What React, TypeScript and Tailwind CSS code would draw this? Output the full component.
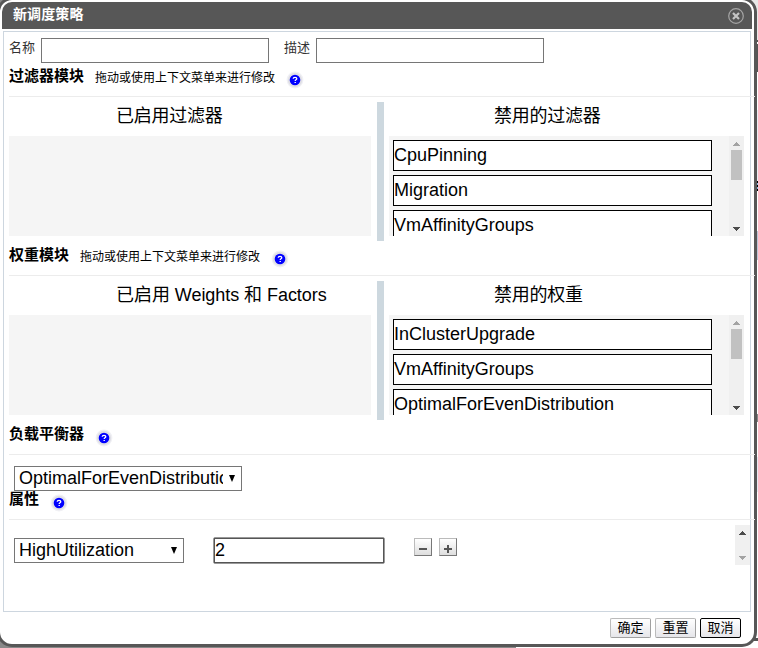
import React from "react";

function Help({ className = "" }: { className?: string }) {
  return (
    <svg className={`h-[18px] w-[18px] shrink-0 ${className}`} viewBox="0 0 18 18">
      <circle cx="9" cy="9" r="8.4" fill="#f0f0f4" />
      <circle cx="9" cy="9" r="7.2" fill="#dfdfe6" />
      <circle cx="9" cy="9" r="5.3" fill="#0000ff" />
      <path d="M7.2 7.7C7.2 5.9 10.8 5.9 10.8 7.7C10.8 8.8 9.2 8.8 9.2 10" fill="none" stroke="#fff" strokeWidth="1.3" />
      <path d="M8.5 10.9h1.4v1.2h-1.4z" fill="#fff" />
    </svg>
  );
}

function Heading({ title, hint, helpClass }: { title: string; hint?: string; helpClass: string }) {
  return (
    <div className="flex h-[33px] w-[746px] shrink-0 border-b border-[#ececec] whitespace-nowrap">
      <div className="h-[24px] text-[15px] leading-[24px] font-bold text-black">{title}</div>
      {hint && <div className="ml-[11px] h-[28px] text-[12px] leading-[28px] text-black">{hint}</div>}
      <Help className={helpClass} />
    </div>
  );
}

function Arrow({ down = false, color }: { down?: boolean; color: string }) {
  return (
    <svg className="h-[4px] w-[7px]" viewBox="0 0 7 4" shapeRendering="crispEdges" fill={color}>
      {down ? (
        <path d="M0 0h7v1H0zM1 1h5v1H1zM2 2h3v1H2zM3 3h1v1H3z" />
      ) : (
        <path d="M3 0h1v1H3zM2 1h3v1H2zM1 2h5v1H1zM0 3h7v1H0z" />
      )}
    </svg>
  );
}

function Policies({ left, right, items, leftClass }: { left: string; right: string; items: string[]; leftClass: string }) {
  return (
    <div className="flex h-[144px] shrink-0 pt-[5px] text-[18px] text-black">
      <div className="w-[362px]">
        <div className={`h-[34px] pl-[107px] leading-[28px] ${leftClass}`}>{left}</div>
        <div className="h-[100px] bg-[#f5f5f5]" />
      </div>
      <div className="ml-[6px] h-[139px] w-[7px] bg-[#cdd8df]" />
      <div className="ml-[5px] w-[355px]">
        <div className="h-[34px] pl-[105px] leading-[28px] tracking-[-0.25px]">{right}</div>
        <div className="flex h-[100px] overflow-hidden bg-[#f5f5f5]">
          <div className="flex w-[340px] flex-col gap-1 pt-1 pl-1">
            {items.map((item) => (
              <div key={item} className="h-[31px] w-[319px] shrink-0 border border-black bg-white leading-[28px]">
                {item}
              </div>
            ))}
          </div>
          <div className="flex h-[100px] w-[15px] flex-col items-center bg-[#f0f0f0] pt-[6px]">
            <Arrow color="#a3a3a3" />
            <div className="mt-1 mr-px ml-px h-[30px] w-[11px] bg-[#c1c1c1]" />
            <div className="mt-[47px] flex"><Arrow down color="#4c4c4c" /></div>
          </div>
        </div>
      </div>
    </div>
  );
}

function Select({ value, className }: { value: string; className: string }) {
  return (
    <div className={`flex h-[25px] items-center border border-[#767676] bg-white pl-1 text-[18px] leading-[23px] text-black ${className}`}>
      <div className="min-w-0 flex-1 overflow-hidden">{value}</div>
      <svg className="mr-[6px] ml-[6px] h-[7px] w-[6px]" viewBox="0 0 6 7"><path d="M0 0h6L3 7z" fill="#000" /></svg>
    </div>
  );
}

function SmallButton({ plus = false }: { plus?: boolean }) {
  return (
    <div className="flex h-[18px] w-[18px] items-center justify-center border border-t-[#bbb] border-r-[#777] border-b-[#777] border-l-[#bbb] bg-linear-to-b from-white to-[#dedede]">
      <svg className="mt-[3px] h-[8px] w-[8px]" viewBox="0 0 8 8" fill="#555">
        <path d="M0 3h8v2H0z" />
        {plus && <path d="M3 0h2v8H3z" />}
      </svg>
    </div>
  );
}

function FooterButton({ label, active = false }: { label: string; active?: boolean }) {
  return (
    <div
      className={`h-[20px] w-[41px] rounded-[2px] border bg-linear-to-b from-white to-[#e6e6ea] text-center text-[13px] leading-[17px] text-black ${
        active ? "border-black" : "border-t-[#bbb] border-r-[#a0a0a0] border-b-[#a0a0a0] border-l-[#bbb]"
      }`}
    >
      {label}
    </div>
  );
}

const edge = [
  "h-[40px] bg-[#e8e8e8]", "h-[2px] bg-[#555]", "h-[2px] bg-white", "h-[28px] bg-[#555]",
  "h-[38px] bg-white", "h-[71px] bg-[#eceef4]", "h-[2px] bg-black", "h-[2px] bg-[#91b9e0]",
  "h-[2px] bg-black", "h-[2px] bg-[#91b9e0]", "h-[2px] bg-black", "h-[40px] bg-white",
  "h-[29px] bg-[#bdc6d8]", "h-[154px] bg-white", "h-[8px] bg-[#888]", "h-[35px] bg-white",
  "h-[35px] bg-[#e9eaf2]", "h-[146px] bg-white", "h-[3px] bg-[#555]", "h-[9px] bg-white",
];

export default function App() {
  return (
    <div
      className="relative h-[648px] w-[758px] overflow-hidden bg-[#898989]"
      style={{ fontFamily: '"Liberation Sans", "Noto Sans CJK SC", sans-serif' }}
    >
      <div className="absolute top-0 right-0 flex h-[648px] w-[8px] flex-col">
        {edge.map((c, i) => <div key={i} className={`shrink-0 ${c}`} />)}
      </div>
      <div className="absolute right-0 bottom-0 h-[4px] w-[242px] bg-white" />
      <div className="absolute -top-[3px] -left-[3px] flex h-[650px] w-[760px] flex-col rounded-[15px] border-[3px] border-[#575757] bg-white px-[2px] pt-[2px]">
        <div className="flex h-[27px] w-[750px] shrink-0 items-center justify-between rounded-t-[10px] bg-[#575757] pr-[8px] pl-[11px]">
          <div className="pb-[3px] text-[14px] leading-[19px] font-bold tracking-[0.1px] text-white">新调度策略</div>
          <svg className="h-[16px] w-[16px]" viewBox="0 0 16 16" fill="none">
            <circle cx="8" cy="8" r="7.3" stroke="#a5a5a5" strokeWidth="1.2" />
            <path d="M5 5l6 6M11 5l-6 6" stroke="#c4c4c4" strokeWidth="2.2" />
          </svg>
        </div>
        <div className="mt-[2px] ml-px flex h-[581px] w-[748px] shrink-0 flex-col border border-[#cdd6df] pt-[6px] pl-[5px]">
          <div className="flex h-[26px] shrink-0 text-[13px] leading-[20px] text-[#333]">
            <div className="w-[32px]">名称</div>
            <div className="h-[25px] w-[228px] border border-[#767676]" />
            <div className="ml-[15px] w-[32px]">描述</div>
            <div className="h-[25px] w-[228px] border border-[#767676]" />
          </div>
          <Heading title="过滤器模块" hint="拖动或使用上下文菜单来进行修改" helpClass="mt-[7px] ml-[11px]" />
          <Policies left="已启用过滤器" leftClass="tracking-[-0.25px]" right="禁用的过滤器" items={["CpuPinning", "Migration", "VmAffinityGroups"]} />
          <div className="mt-[2px] flex">
            <Heading title="权重模块" hint="拖动或使用上下文菜单来进行修改" helpClass="mt-[7px] ml-[11px]" />
          </div>
          <Policies left="已启用 Weights 和 Factors" leftClass="tracking-[-0.05px]" right="禁用的权重" items={["InClusterUpgrade", "VmAffinityGroups", "OptimalForEvenDistribution"]} />
          <div className="mt-[2px] flex">
            <Heading title="负载平衡器" helpClass="mt-[7px] ml-[11px]" />
          </div>
          <Select value="OptimalForEvenDistribution" className="mt-[11px] ml-[5px] w-[228px] shrink-0" />
          <div className="-mt-[4px] flex">
            <Heading title="属性" helpClass="mt-[7px] ml-[11px]" />
          </div>
          <div className="flex h-[45px] shrink-0 pt-[5px]">
            <Select value="HighUtilization" className="mt-[13px] ml-[5px] w-[170px]" />
            <div className="mt-[12px] ml-[29px] h-[27px] w-[172px] rounded-[2px] border border-[#999] bg-white text-[18px] text-black">
              <div className="h-[25px] border border-[#555] leading-[22px]">2</div>
            </div>
            <div className="mt-[13px] ml-[29px] flex gap-[7px]">
              <SmallButton />
              <SmallButton plus />
            </div>
            <div className="ml-[278px] flex h-[40px] w-[15px] shrink-0 flex-col items-center justify-between bg-[#f0f0f0] pt-[6px] pb-[5px]">
              <Arrow color="#4c4c4c" />
              <Arrow down color="#a3a3a3" />
            </div>
          </div>
        </div>
        <div className="mt-[6px] flex justify-end gap-[4px] pr-[11px]">
          <FooterButton label="确定" />
          <FooterButton label="重置" />
          <FooterButton label="取消" active />
        </div>
      </div>
    </div>
  );
}
